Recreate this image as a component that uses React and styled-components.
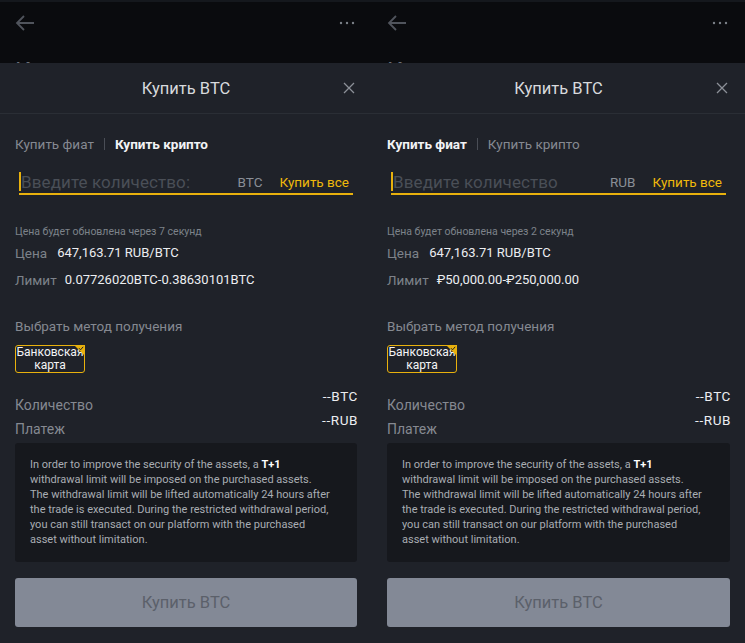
import React from "react";
import styled, { createGlobalStyle } from "styled-components";

const GlobalStyle = createGlobalStyle`
  html, body { margin: 0; padding: 0; background: #1f2229; }
  body { font-family: Roboto, "Noto Sans", Arial, sans-serif; }
`;

const Screens = styled.div`
  display: grid;
  grid-template-columns: 372px 373px;
  width: 745px;
  height: 643px;
  overflow: hidden;
`;

const Phone = styled.div`
  display: flex;
  flex-direction: column;
  height: 643px;
  background: #1f2229;
`;

const TopBar = styled.div`
  height: 63px;
  overflow: hidden;
  background: #0a0b0e;
  border-top: 2px solid #15181d;
  box-sizing: border-box;
`;

const NavRow = styled.div`
  display: flex;
  justify-content: space-between;
  align-items: center;
  height: 42px;
  padding: 0 17px 0 15px;
`;

const PageTitle = styled.div`
  margin-top: 13px;
  padding-left: 15px;
  font-size: 24px;
  color: #6b7079;
  line-height: 28px;
`;

const Sheet = styled.div`
  flex: 1;
  display: flex;
  flex-direction: column;
  background: #1f2229;
`;

const Header = styled.div`
  display: flex;
  align-items: center;
  justify-content: center;
  position: relative;
  height: 50px;
  border-bottom: 1px solid #2a2e35;
  font-size: 16.5px;
  color: #d8dadd;
`;

const Close = styled.div`
  position: absolute;
  right: 17px;
  top: 19px;
  display: flex;
`;

const Body = styled.div`
  display: flex;
  flex-direction: column;
  padding: 21px 15px 0 15px;
`;

const Tabs = styled.div`
  display: flex;
  align-items: center;
  height: 18px;
  font-size: 13.5px;
`;

const Tab = styled.span`
  color: ${(p) => (p.$active ? "#f2f3f5" : "#858991")};
  font-weight: ${(p) => (p.$active ? 700 : 400)};
`;

const Sep = styled.span`
  width: 1px;
  height: 12px;
  background: #4a4e56;
  margin: 0 10px;
`;

const InputRow = styled.div`
  display: flex;
  align-items: center;
  margin: 17px 4px 0 4px;
  height: 23px;
  border-bottom: 2px solid #e8b10d;
  padding-right: 4px;
`;

const Caret = styled.span`
  width: 2px;
  height: 19px;
  background: #e8b10d;
`;

const Placeholder = styled.span`
  flex: 1;
  font-size: 17px;
  color: #4a4f57;
  letter-spacing: 0.1px;
`;

const Unit = styled.span`
  font-size: 13.5px;
  color: #8a8f97;
  margin-right: 17px;
`;

const BuyAll = styled.span`
  font-size: 13.5px;
  color: #f0b90b;
`;

const Note = styled.div`
  margin-top: 30px;
  font-size: 10.5px;
  line-height: 14px;
  color: #7d828a;
`;

const InfoLine = styled.div`
  display: flex;
  align-items: center;
  gap: ${(p) => p.$gap}px;
  height: 27px;
  font-size: 13.5px;
  color: #7d828a;
`;

const Value = styled.span`
  color: #eceef1;
  font-size: 13px;
`;

const SectionTitle = styled.div`
  margin-top: 24px;
  font-size: 13.5px;
  line-height: 18px;
  color: #858991;
`;

const Chip = styled.div`
  position: relative;
  margin-top: 10px;
  width: 70px;
  height: 28px;
  box-sizing: border-box;
  border: 1px solid #e8b10d;
  border-radius: 3px;
  display: flex;
  align-items: center;
  justify-content: center;
  text-align: center;
  font-size: 12px;
  line-height: 13px;
  color: #f4f5f6;
  white-space: nowrap;
`;

const Corner = styled.svg`
  position: absolute;
  top: -1px;
  right: -1px;
`;

const Totals = styled.div`
  display: flex;
  justify-content: space-between;
  margin-top: 11px;
`;

const Labels = styled.div`
  display: flex;
  flex-direction: column;
  padding-top: 9px;
  font-size: 14px;
  line-height: 24px;
  color: #858991;
`;

const Amounts = styled.div`
  display: flex;
  flex-direction: column;
  align-items: flex-end;
  font-size: 13.5px;
  line-height: 24px;
  color: #eceef1;
  letter-spacing: 0.6px;
  margin-right: -1px;
`;

const Notice = styled.div`
  margin-top: 2px;
  background: #16181d;
  border-radius: 3px;
  padding: 14px 10px 15px 15px;
  font-size: 11px;
  line-height: 15px;
  color: #a9adb3;
  white-space: nowrap;
  b {
    color: #ffffff;
    font-weight: 700;
    line-height: 15px;
  }
`;

const NoticeLine = styled.div`
  height: 15px;
`;

const BuyButton = styled.div`
  margin-top: 16px;
  height: 49px;
  border-radius: 3px;
  background: #838996;
  display: flex;
  align-items: center;
  justify-content: center;
  font-size: 16.5px;
  color: #5b606a;
`;

const BackIcon = () => (
  <svg width="20" height="18" viewBox="0 0 20 18">
    <path d="M19 9H2M9 2L2 9l7 7" fill="none" stroke="#50545c" strokeWidth="1.8" />
  </svg>
);

const DotsIcon = () => (
  <svg width="16" height="4" viewBox="0 0 16 4">
    {[2, 8, 14].map((x) => (
      <circle key={x} cx={x} cy="2" r="1.2" fill="#7b8088" />
    ))}
  </svg>
);

const CloseIcon = () => (
  <svg width="12" height="12" viewBox="0 0 12 12">
    <path d="M1 1l10 10M11 1L1 11" stroke="#8c9098" strokeWidth="1.3" />
  </svg>
);

const noticeLines = [
  <>
    In order to improve the security of the assets, a <b>T+1</b>
  </>,
  "withdrawal limit will be imposed on the purchased assets.",
  "The withdrawal limit will be lifted automatically 24 hours after",
  "the trade is executed. During the restricted withdrawal period,",
  "you can still transact on our platform with the purchased",
  "asset without limitation.",
];

const panels = [
  {
    fiat: false,
    placeholder: "Введите количество:",
    unit: "BTC",
    seconds: 7,
    limit: "0.07726020BTC-0.38630101BTC",
  },
  {
    fiat: true,
    placeholder: "Введите количество",
    unit: "RUB",
    seconds: 2,
    limit: "₽50,000.00-₽250,000.00",
  },
];

function Panel({ data }) {
  return (
    <Phone>
      <TopBar>
        <NavRow>
          <BackIcon />
          <DotsIcon />
        </NavRow>
        <PageTitle>Купить</PageTitle>
      </TopBar>
      <Sheet>
        <Header>
          Купить BTC
          <Close>
            <CloseIcon />
          </Close>
        </Header>
        <Body>
          <Tabs>
            <Tab $active={data.fiat}>Купить фиат</Tab>
            <Sep />
            <Tab $active={!data.fiat}>Купить крипто</Tab>
          </Tabs>
          <InputRow>
            <Caret />
            <Placeholder>{data.placeholder}</Placeholder>
            <Unit>{data.unit}</Unit>
            <BuyAll>Купить все</BuyAll>
          </InputRow>
          <Note>Цена будет обновлена через {data.seconds} секунд</Note>
          <InfoLine $gap={10}>
            Цена <Value>647,163.71 RUB/BTC</Value>
          </InfoLine>
          <InfoLine $gap={8}>
            Лимит <Value>{data.limit}</Value>
          </InfoLine>
          <SectionTitle>Выбрать метод получения</SectionTitle>
          <Chip>
            Банковская
            <br />
            карта
            <Corner width="11" height="11" viewBox="0 0 11 11">
              <path d="M0 0h11v11z" fill="#e8b10d" />
              <path d="M5 3.2l1.6 1.6L9.2 1.8" fill="none" stroke="#1f2229" strokeWidth="1" />
            </Corner>
          </Chip>
          <Totals>
            <Labels>
              <span>Количество</span>
              <span>Платеж</span>
            </Labels>
            <Amounts>
              <span>--BTC</span>
              <span>--RUB</span>
            </Amounts>
          </Totals>
          <Notice>
            {noticeLines.map((line, i) => (
              <NoticeLine key={i}>{line}</NoticeLine>
            ))}
          </Notice>
          <BuyButton>Купить BTC</BuyButton>
        </Body>
      </Sheet>
    </Phone>
  );
}

export default function App() {
  return (
    <>
      <GlobalStyle />
      <Screens>
        {panels.map((p) => (
          <Panel key={p.unit} data={p} />
        ))}
      </Screens>
    </>
  );
}
